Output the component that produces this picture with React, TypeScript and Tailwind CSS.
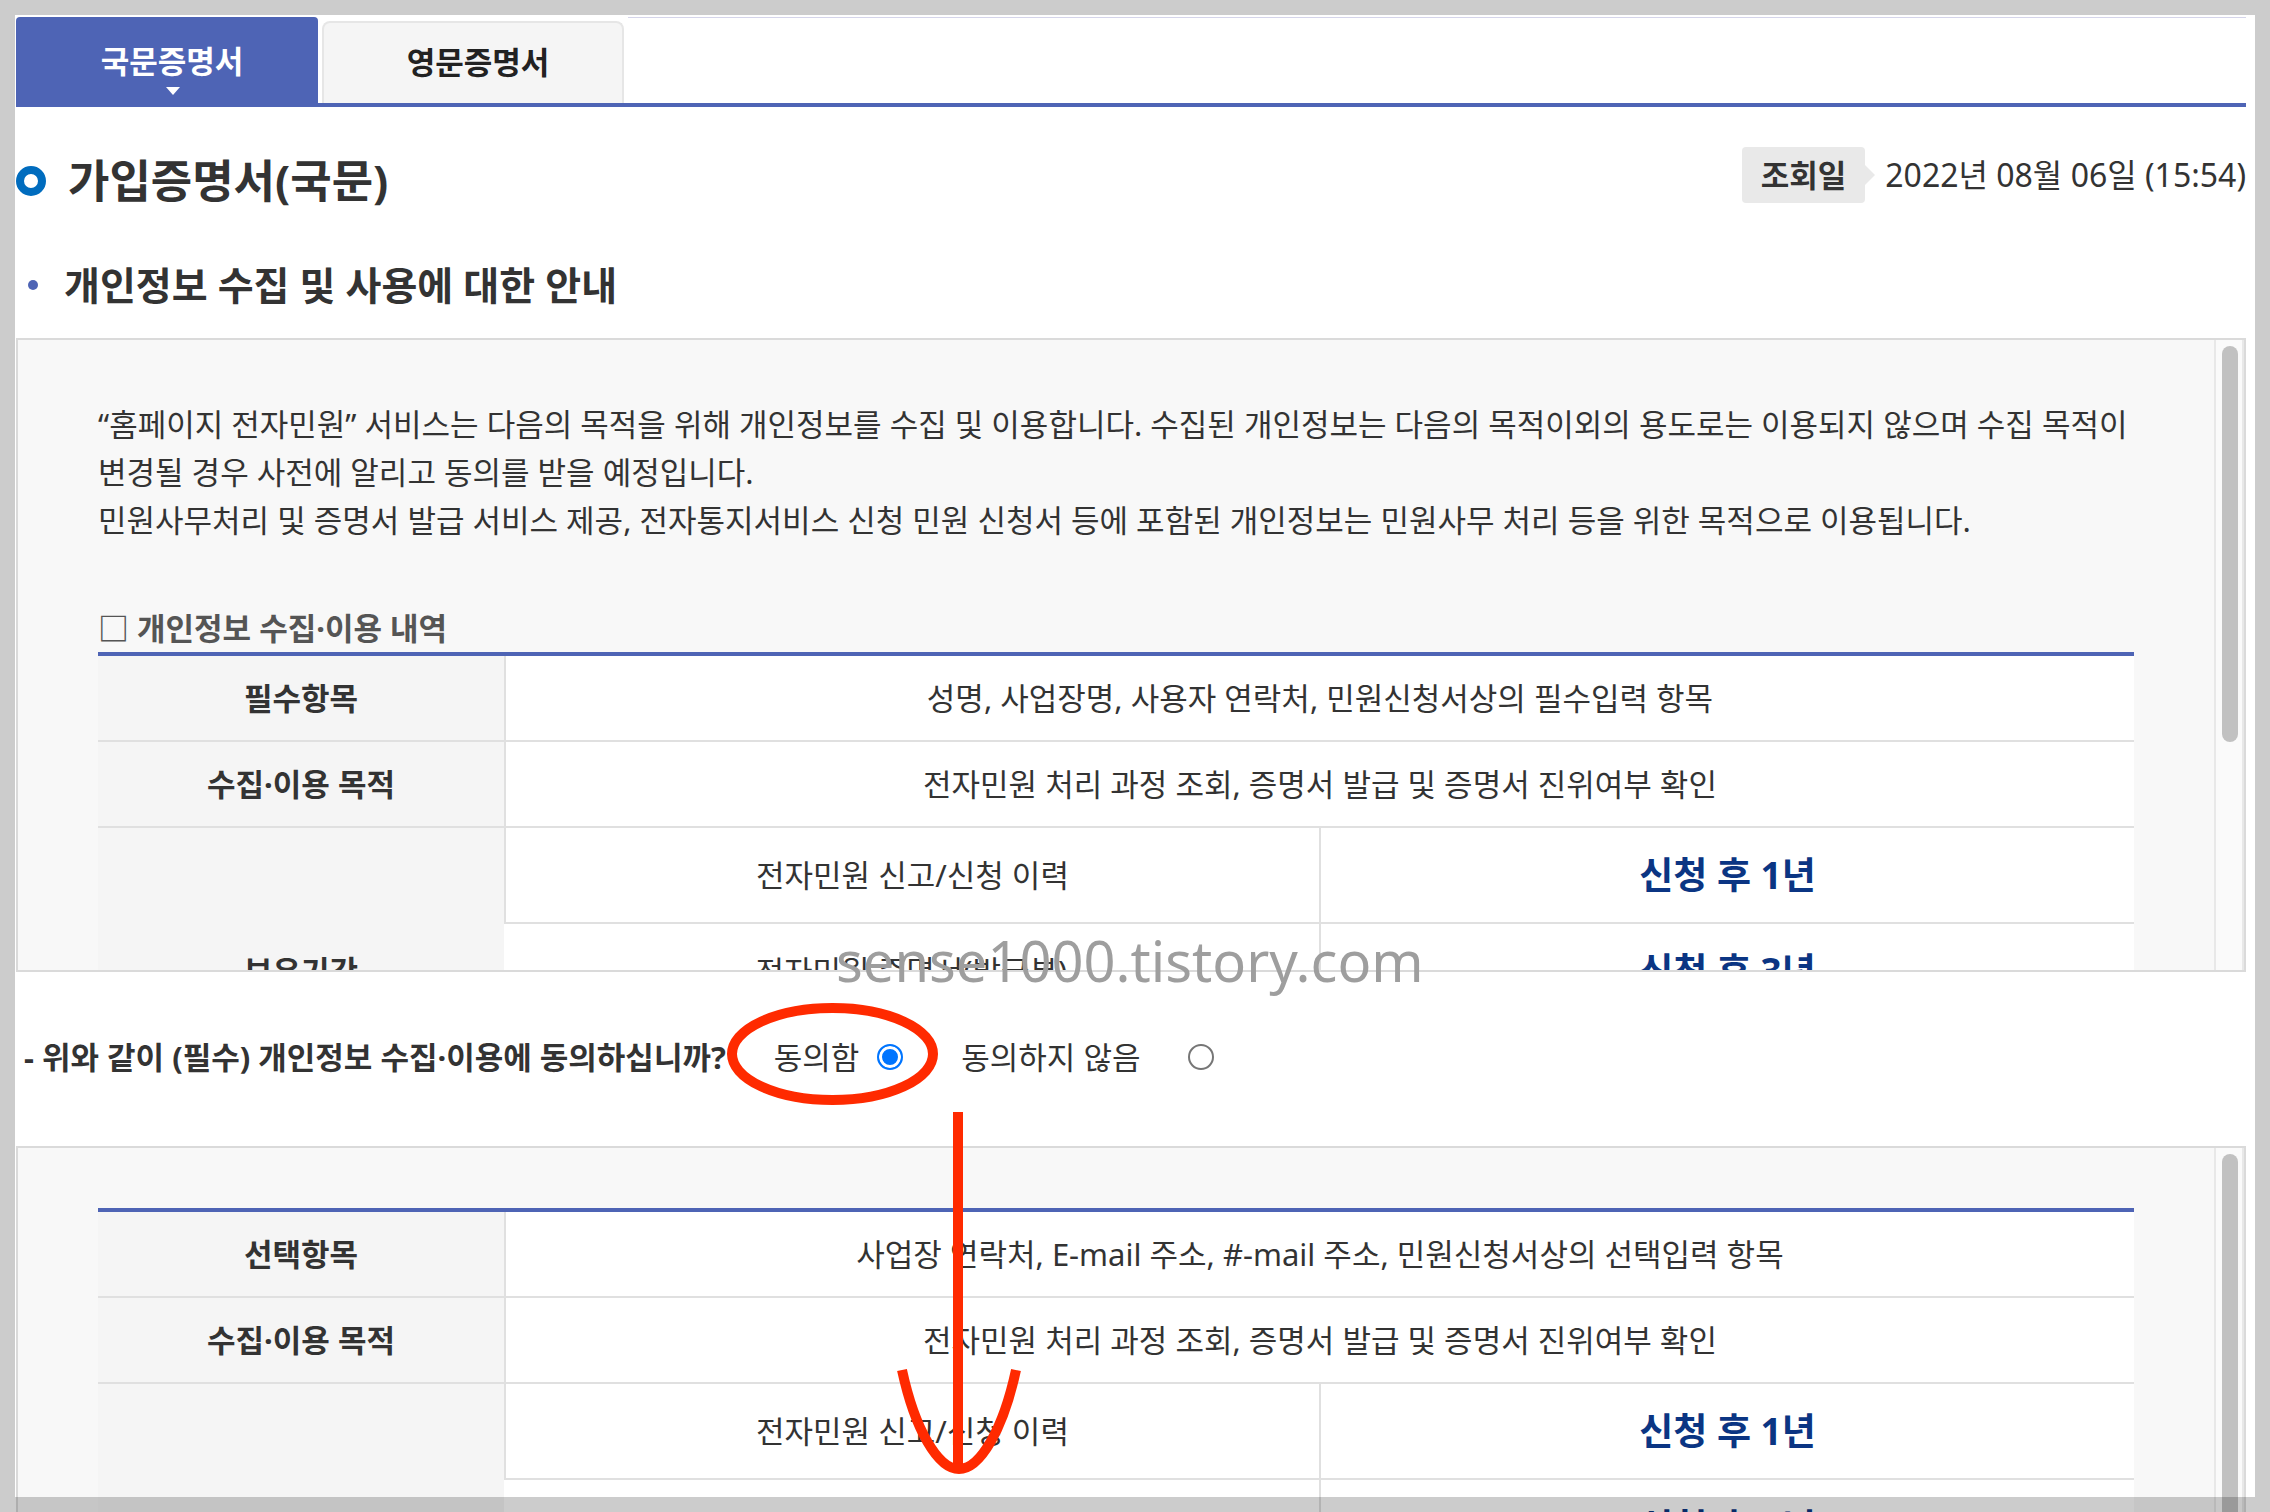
import { useState, type ReactNode } from 'react'

type ConsentData = {
  label: string
  items: string
  purpose: string
}

const required: ConsentData = {
  label: '필수항목',
  items: '성명, 사업장명, 사용자 연락처, 민원신청서상의 필수입력 항목',
  purpose: '전자민원 처리 과정 조회, 증명서 발급 및 증명서 진위여부 확인',
}

const optional: ConsentData = {
  label: '선택항목',
  items: '사업장 연락처, E-mail 주소, #-mail 주소, 민원신청서상의 선택입력 항목',
  purpose: '전자민원 처리 과정 조회, 증명서 발급 및 증명서 진위여부 확인',
}

const retention = [
  { name: '전자민원 신고/신청 이력', period: '신청 후 1년' },
  { name: '전자민원 증명서(발급분)', period: '신청 후 3년' },
  { name: '전자민원 처리 결과', period: '신청 후 3년' },
]

function ConsentTable({ data }: { data: ConsentData }) {
  const th = 'border-b-2 border-[#e0e0e0] bg-[#f5f5f5] text-center font-bold'
  const td = 'border-b-2 border-[#e0e0e0] bg-white text-center'

  return (
    <table className="w-full table-fixed border-separate border-spacing-0 border-t-4 border-[#4e64b5]">
      <colgroup>
        <col className="w-[406px]" />
        <col />
        <col />
      </colgroup>
      <tbody>
        <tr className="h-[86px]">
          <th scope="row" className={th}>
            {data.label}
          </th>
          <td colSpan={2} className={`${td} border-l-2`}>
            {data.items}
          </td>
        </tr>
        <tr className="h-[86px]">
          <th scope="row" className={th}>
            수집·이용 목적
          </th>
          <td colSpan={2} className={`${td} border-l-2`}>
            {data.purpose}
          </td>
        </tr>
        {retention.map((item, i) => (
          <tr key={item.name} className="h-24">
            {i === 0 && (
              <th scope="rowgroup" rowSpan={retention.length} className={th}>
                보유기간
              </th>
            )}
            <td className={i === 0 ? `${td} border-l-2` : td}>{item.name}</td>
            <td
              className={`${td} border-l-2 text-[37px] font-bold text-[#0b3583]`}
            >
              {item.period}
            </td>
          </tr>
        ))}
      </tbody>
    </table>
  )
}

function ScrollPanel({ children }: { children: ReactNode }) {
  return (
    <div className="flex h-[634px] border-2 border-[#dadada] bg-[#f8f8f8]">
      <div className="min-w-0 flex-1 overflow-hidden px-20 pt-[60px]">
        {children}
      </div>
      <div className="w-[30px] shrink-0 border-x-2 border-[#e8e8e8] bg-[#fafafa] px-[6px] pt-[6px]">
        <div className="h-[396px] w-4 rounded-full bg-[#c1c1c1]" />
      </div>
    </div>
  )
}

export default function App() {
  const [agreed, setAgreed] = useState<boolean>(true)

  const radio =
    'size-[26px] appearance-none rounded-full border-2 border-[#767676] bg-white checked:border-[#0075ff] checked:bg-[#0075ff] checked:shadow-[inset_0_0_0_3px_#fff]'

  return (
    <div className="relative h-screen overflow-hidden bg-white px-4 pt-[17px] font-['Noto_Sans','Noto_Sans_CJK_KR',sans-serif] text-[31px] leading-[48px] break-keep text-[#333]">
      <div className="mr-2">
        <nav className="flex h-[90px] items-end gap-1 border-b-4 border-[#4e64b5]">
          <button
            type="button"
            className="relative -mb-1 h-[90px] w-[302px] rounded-t bg-[#4e64b5] pb-[2px] pl-[10px] font-bold text-white"
          >
            국문증명서
            <svg
              className="absolute bottom-3 left-[150px] h-2 w-[14px]"
              viewBox="0 0 14 8"
              fill="#fff"
            >
              <path d="M0 0h14L7 8z" />
            </svg>
          </button>
          <button
            type="button"
            className="h-[82px] w-[302px] rounded-t-lg border-2 border-b-0 border-[#e6e6e6] bg-[#f5f5f5] pb-[2px] pl-[10px] font-bold text-[#222]"
          >
            영문증명서
          </button>
          <div className="h-full flex-1 border-t border-[#d5d5ea]" />
        </nav>

        <header className="flex items-start justify-between pt-10">
          <h1 className="flex items-center gap-[22px] pt-[6px] text-[45px] leading-[56px] font-bold">
            <span className="size-[30px] rounded-full border-8 border-[#006cbe]" />
            가입증명서(국문)
          </h1>
          <div className="flex items-center">
            <span className="rounded bg-[#e9e9e9] px-[19px] py-1 font-bold">
              조회일
            </span>
            <svg
              className="mr-[10px] h-5 w-[10px]"
              viewBox="0 0 10 20"
              fill="#e9e9e9"
            >
              <path d="M0 0l10 10L0 20z" />
            </svg>
            <time className="text-[32px]">2022년 08월 06일 (15:54)</time>
          </div>
        </header>

        <h2 className="mt-[49px] mb-[26px] flex items-center gap-[26px] pl-3 text-[39px] leading-[54px] font-bold">
          <span className="size-[10px] rounded-full bg-[#4e64b5]" />
          개인정보 수집 및 사용에 대한 안내
        </h2>

        <ScrollPanel>
          <p>
            “홈페이지 전자민원” 서비스는 다음의 목적을 위해 개인정보를 수집 및
            이용합니다. 수집된 개인정보는 다음의 목적이외의 용도로는 이용되지
            않으며 수집 목적이 변경될 경우 사전에 알리고 동의를 받을 예정입니다.
          </p>
          <p>
            민원사무처리 및 증명서 발급 서비스 제공, 전자통지서비스 신청 민원
            신청서 등에 포함된 개인정보는 민원사무 처리 등을 위한 목적으로
            이용됩니다.
          </p>
          <h3 className="mt-[60px] font-bold text-[#555]">
            □ 개인정보 수집·이용 내역
          </h3>
          <ConsentTable data={required} />
        </ScrollPanel>

        <fieldset className="flex h-[174px] items-center pb-1 pl-2">
          <legend className="sr-only">개인정보 수집·이용 동의</legend>
          <span className="font-bold">
            - 위와 같이 (필수) 개인정보 수집·이용에 동의하십니까?
          </span>
          <label className="ml-12 flex items-center gap-[18px]">
            동의함
            <input
              type="radio"
              name="agree"
              className={radio}
              checked={agreed}
              onChange={() => setAgreed(true)}
            />
          </label>
          <label className="ml-[58px] flex items-center gap-12">
            동의하지 않음
            <input
              type="radio"
              name="agree"
              className={radio}
              checked={!agreed}
              onChange={() => setAgreed(false)}
            />
          </label>
        </fieldset>

        <ScrollPanel>
          <ConsentTable data={optional} />
        </ScrollPanel>
      </div>

      {/* guide marks drawn over the page */}
      <svg
        className="pointer-events-none absolute top-[1000px] left-[720px] h-[480px] w-[310px]"
        viewBox="720 1000 310 480"
        fill="none"
        stroke="#ff2a00"
        strokeWidth="10"
      >
        <ellipse cx="832.5" cy="1054" rx="100.5" ry="46" />
        <path d="M958 1112V1466" />
        <path d="M902 1370C915 1430 938 1469 959 1469S1003 1430 1016 1370" />
      </svg>
      <span className="pointer-events-none absolute top-[920px] left-[836px] text-[56px] leading-[80px] text-[#9e9e9e]">
        sense1000.tistory.com
      </span>
      <div className="pointer-events-none absolute inset-0 border-[15px] border-black/20" />
    </div>
  )
}
